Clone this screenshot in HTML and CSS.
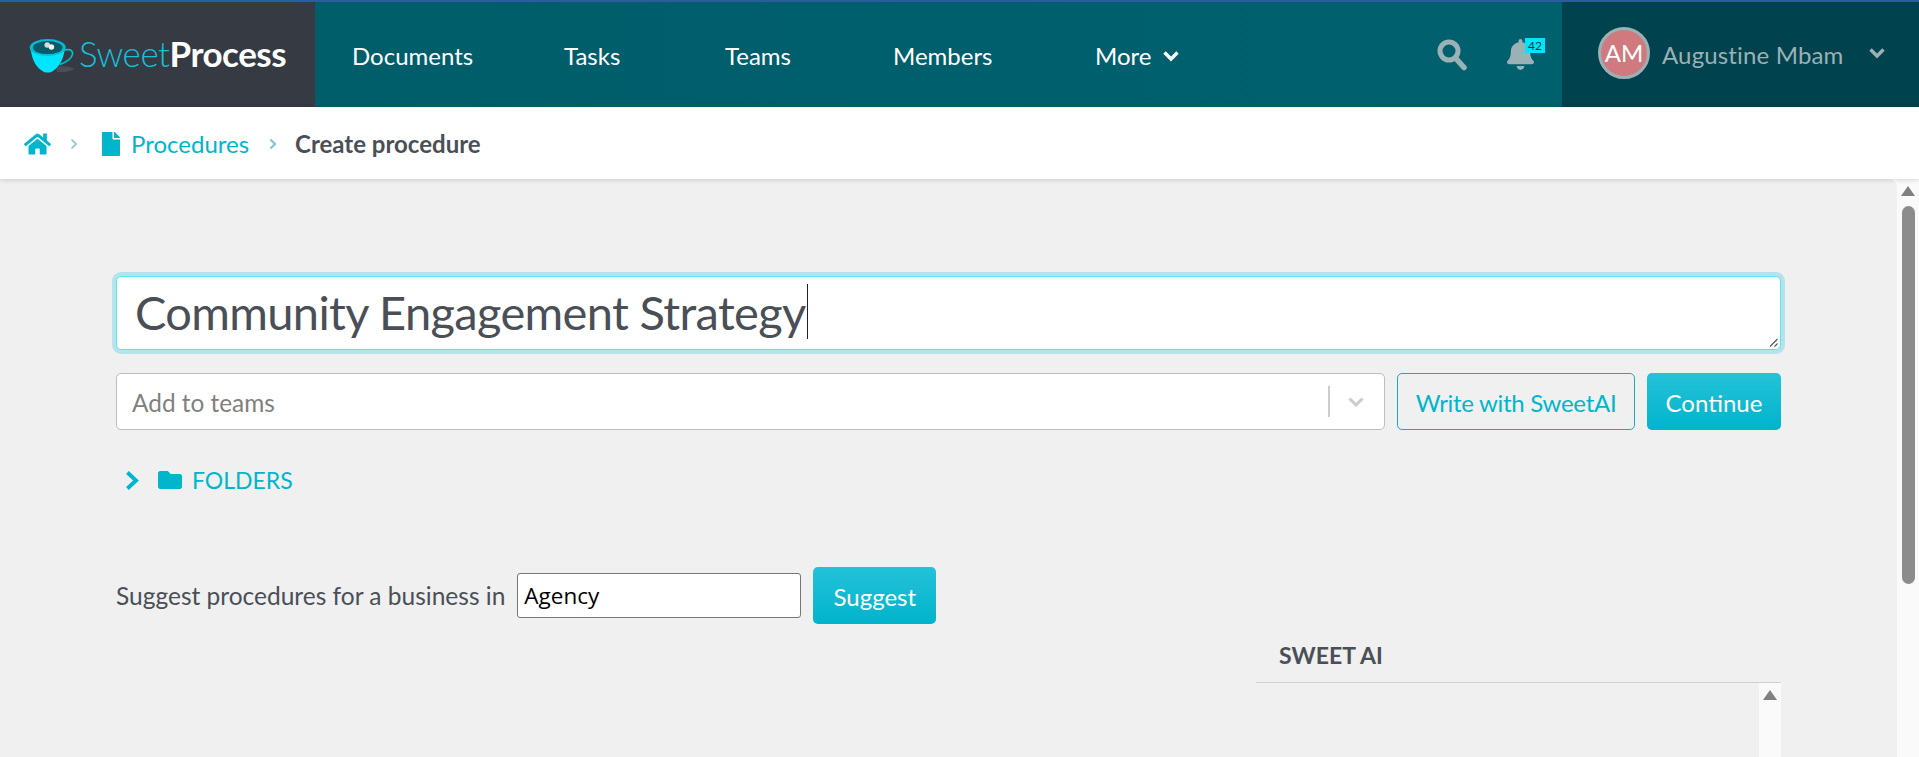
FILE: index.html
```html
<!DOCTYPE html>
<html lang="en">
<head>
<meta charset="utf-8">
<title>Create procedure</title>
<link rel="stylesheet" href="styles.css">
</head>
<body>
<header class="topbar">
  <a class="brand">
    <svg class="cup" viewBox="0 0 44 34">
      <path d="M26 27 q10 -1 17 2 q-6 4 -17 3z" fill="#4b4f55"/>
      <path d="M31 12 q10 -3 10 3 q-1 6 -12 10" fill="none" stroke="#00bcd4" stroke-width="1.6"/>
      <path d="M1 8 Q3 27 14 32 Q17 33 21 32 Q32 26 34 8z" fill="#00e5ff"/>
      <ellipse cx="17.5" cy="9" rx="17" ry="8" fill="#00bcd4"/>
      <ellipse cx="17.5" cy="9" rx="14" ry="6.2" fill="#0a5a68"/>
      <circle cx="17" cy="6.5" r="2.6" fill="#d9d9d9"/>
      <circle cx="21" cy="8.5" r="2.6" fill="#f2f2f2"/>
    </svg>
    <span class="brand-text"><span class="brand-sweet">Sweet</span><span class="brand-process">Process</span></span>
  </a>
  <nav class="mainnav">
    <a class="nav-documents">Documents</a>
    <a class="nav-tasks">Tasks</a>
    <a class="nav-teams">Teams</a>
    <a class="nav-members">Members</a>
    <a class="nav-more">More
      <svg class="chev-more" viewBox="0 0 18 12"><path d="M2.5 2.5 9 9l6.5-6.5" fill="none" stroke="#fff" stroke-width="3.4"/></svg>
    </a>
  </nav>
  <div class="tools">
    <svg class="icon-search" viewBox="0 0 30 32"><circle cx="12" cy="12" r="9" fill="none" stroke="#9ab1b6" stroke-width="5"/><path d="M18.5 19 27 28.5" stroke="#9ab1b6" stroke-width="5.600" stroke-linecap="round"/></svg>
    <span class="bell">
      <svg class="icon-bell" viewBox="0 0 448 512"><path fill="#9ab1b6" d="M224 512c35.32 0 63.97-28.65 63.97-64H160.03c0 35.35 28.65 64 63.97 64zm215.39-149.71c-19.32-20.76-55.47-51.99-55.47-154.29 0-77.7-54.48-139.9-127.94-155.16V32c0-17.67-14.32-32-31.98-32s-31.98 14.33-31.98 32v20.84C118.56 68.1 64.08 130.3 64.08 208c0 102.3-36.15 133.53-55.47 154.29-6 6.45-8.66 14.16-8.61 21.71.11 16.4 12.98 32 32.1 32h383.8c19.12 0 32-15.6 32.1-32 .05-7.55-2.61-15.27-8.61-21.71z"/></svg>
      <span class="badge">42</span>
    </span>
  </div>
  <div class="user">
    <span class="avatar">AM</span>
    <span class="user-name">Augustine Mbam</span>
    <svg class="chev-user" viewBox="0 0 18 12"><path d="M2.5 2.5 9 9l6.5-6.5" fill="none" stroke="#9ab1b6" stroke-width="3.4"/></svg>
  </div>
</header>

<div class="crumbs">
  <svg class="icon-home" viewBox="0 0 576 512"><path fill="#00b5cc" d="M280.37 148.26L96 300.11V464a16 16 0 0 0 16 16l112.06-.29a16 16 0 0 0 15.92-16V368a16 16 0 0 1 16-16h64a16 16 0 0 1 16 16v95.64a16 16 0 0 0 16 16.05L464 480a16 16 0 0 0 16-16V300L295.67 148.26a12.19 12.19 0 0 0-15.3 0zM571.6 251.47L488 182.56V44.05a12 12 0 0 0-12-12h-56a12 12 0 0 0-12 12v72.61L318.47 43a48 48 0 0 0-61 0L4.34 251.47a12 12 0 0 0-1.6 16.9l25.5 31A12 12 0 0 0 45.15 301l235.22-193.74a12.19 12.19 0 0 1 15.3 0L530.9 301a12 12 0 0 0 16.9-1.6l25.5-31a12 12 0 0 0-1.7-16.93z"/></svg>
  <svg class="crumb-sep sep-a" viewBox="0 0 8 12"><path d="M1.5 1.5 6 6l-4.500 4.500" fill="none" stroke="#86c5d0" stroke-width="1.700"/></svg>
  <svg class="icon-file" viewBox="0 0 384 512"><path fill="#00b5cc" d="M224 136V0H24C10.7 0 0 10.7 0 24v464c0 13.3 10.7 24 24 24h336c13.3 0 24-10.7 24-24V160H248c-13.2 0-24-10.8-24-24zm160-14.1v6.1H256V0h6.1c6.400 0 12.500 2.500 17 7l97.900 98c4.500 4.500 7 10.600 7 16.900z"/></svg>
  <a class="crumb-link">Procedures</a>
  <svg class="crumb-sep sep-b" viewBox="0 0 8 12"><path d="M1.5 1.5 6 6l-4.500 4.500" fill="none" stroke="#86c5d0" stroke-width="2.200"/></svg>
  <span class="crumb-current">Create procedure</span>
</div>

<div class="viewport">
  <main class="content">
    <div class="title-box">
      <span class="title-text">Community Engagement Strategy</span><span class="caret"></span>
      <svg class="resize" viewBox="0 0 10 10"><path d="M9.500 2 2 9.500M9.500 6.500 6.500 9.500" stroke="#555" stroke-width="1.100"/></svg>
    </div>
    <div class="action-row">
      <div class="team-select">
        <span class="placeholder">Add to teams</span>
        <span class="select-divider"></span>
        <svg class="chev-select" viewBox="0 0 18 12"><path d="M2.500 2.500 9 9l6.500-6.500" fill="none" stroke="#ccc" stroke-width="3"/></svg>
      </div>
      <button class="btn btn-outline">Write with SweetAI</button>
      <button class="btn btn-solid btn-continue">Continue</button>
    </div>
    <div class="folders">
      <svg class="chev-folder" viewBox="0 0 14 20"><path d="M3 3l7.500 7L3 17" fill="none" stroke="#00b5cc" stroke-width="3.400"/></svg>
      <svg class="icon-folder" viewBox="0 0 512 512"><path fill="#00b5cc" d="M464 128H272l-64-64H48C21.490 64 0 85.490 0 112v288c0 26.510 21.490 48 48 48h416c26.510 0 48-21.490 48-48V176c0-26.510-21.490-48-48-48z"/></svg>
      <span class="folders-label">FOLDERS</span>
    </div>
    <div class="suggest">
      <span class="suggest-label">Suggest procedures for a business in</span>
      <input class="suggest-input" type="text" value="Agency">
      <button class="btn btn-solid btn-suggest">Suggest</button>
    </div>
    <aside class="ai-panel">
      <h2 class="ai-title">SWEET AI</h2>
      <div class="ai-body">
        <div class="ai-scroll"><span class="arrow-up"></span></div>
      </div>
    </aside>
  </main>
  <div class="page-scroll">
    <span class="arrow-up"></span>
    <span class="thumb"></span>
  </div>
</div>
</body>
</html>
```

FILE: styles.css
```css
* { box-sizing: border-box; }
html, body { margin: 0; height: 100%; overflow: hidden; }
body {
  display: flex;
  flex-direction: column;
  background: #fff;
  font-family: Lato, "Noto Sans", sans-serif;
  color: #4a4f57;
}

/* top bar */
.topbar {
  display: flex;
  flex: none;
  height: 107px;
  border-top: 2px solid #2a5c9e;
  background: linear-gradient(90deg, #005d6a, #00616e);
}
.brand {
  display: flex;
  align-items: center;
  flex: none;
  width: 315px;
  padding-left: 29px;
  background: #363a42;
}
.cup { width: 47px; height: 36px; margin-top: 2px; }
.brand-text { margin: 0 0 4px 3px; font-size: 35px; letter-spacing: -0.5px; }
.brand-sweet { color: #14c0da; font-weight: 300; }
.brand-process { color: #fff; font-weight: 700; }

.mainnav {
  display: flex;
  align-items: center;
  flex: none;
  padding: 2px 0 0 37px;
  color: #fff;
  font-size: 24px;
}
.nav-documents { width: 212px; }
.nav-tasks { width: 161px; }
.nav-teams { width: 168px; }
.nav-members { width: 202px; }
.nav-more { display: flex; align-items: center; }
.chev-more { width: 18px; height: 12px; margin-left: 11px; }

.tools {
  display: flex;
  align-items: center;
  flex: none;
  margin-left: auto;
}
.icon-search { width: 30px; height: 32px; }
.bell { position: relative; display: flex; margin: 0 28px 0 40px; }
.icon-bell { width: 27px; height: 31px; }
.badge {
  position: absolute;
  top: -1px;
  right: -11px;
  width: 20px;
  height: 15px;
  background: #00e5ff;
  color: #12323b;
  font-size: 12px;
  line-height: 15px;
  text-align: center;
}

.user {
  display: flex;
  align-items: center;
  flex: none;
  width: 357px;
  padding: 0 0 4px 36px;
  background: #00424d;
  color: #9ab1b6;
}
.avatar {
  display: flex;
  align-items: center;
  justify-content: center;
  width: 52px;
  height: 52px;
  border: 3px solid #9ab1b6;
  border-radius: 50%;
  background: #d07a80;
  color: #fff;
  font-size: 24px;
}
.user-name { margin: 4px 0 0 12px; font-size: 24px; letter-spacing: 0.15px; width: 206px; }
.chev-user { width: 18px; height: 12px; }

/* breadcrumbs */
.crumbs {
  position: relative;
  z-index: 1;
  display: flex;
  align-items: center;
  flex: none;
  height: 72px;
  padding: 1px 0 0 24px;
  background: #fff;
  box-shadow: 0 1px 5px rgba(0, 0, 0, 0.16);
  font-size: 24px;
}
.icon-home { width: 27px; height: 24px; }
.crumb-sep { width: 8px; height: 12px; }
.sep-a { margin-left: 19px; }
.icon-file { width: 18px; height: 24px; margin-left: 24px; }
.crumb-link { margin-left: 11px; color: #00b5cc; }
.sep-b { margin-left: 20px; }
.crumb-current { margin-left: 18px; font-weight: 700; color: #4a4f57; }

/* body */
.viewport { display: flex; flex: 1; min-height: 0; }
.content {
  flex: 1;
  min-width: 0;
  padding: 97px 116px 0;
  background: #f0f0f0;
  border-top-right-radius: 8px;
}
.title-box {
  position: relative;
  display: flex;
  align-items: center;
  height: 74px;
  padding: 0 0 3px 18px;
  border: 1px solid #5ce6f5;
  border-radius: 5px;
  background: #fff;
  box-shadow: 0 0 0 4px #b5e3ea;
  font-size: 47px;
}
.title-text { color: #4a4f57; letter-spacing: -0.65px; }
.caret { width: 1px; height: 55px; margin-left: 1px; background: #222; }
.resize { position: absolute; right: 2px; bottom: 2px; width: 10px; height: 10px; }

.action-row { display: flex; gap: 12px; margin-top: 23px; }
.team-select {
  display: flex;
  align-items: center;
  flex: 1;
  height: 57px;
  padding: 0 19px 0 15px;
  border: 1px solid #bdbdbd;
  border-radius: 5px;
  background: #fff;
}
.placeholder { flex: 1; padding-top: 1px; color: #808080; font-size: 24.4px; }
.select-divider { width: 2px; height: 31px; margin-right: 17px; background: #ccc; }
.chev-select { width: 18px; height: 12px; }
.btn {
  height: 57px;
  padding: 2px 0 0;
  border-radius: 5px;
  font-family: Lato, sans-serif;
  font-size: 24px;
}
.btn-outline {
  width: 238px;
  border: 1px solid #1aa9bd;
  background: transparent;
  color: #00b5cc;
  letter-spacing: -0.3px;
}
.btn-solid {
  border: 0;
  background: linear-gradient(180deg, #24c2d8, #00b4cc);
  color: #fff;
}
.btn-continue { width: 134px; }

.folders {
  display: flex;
  align-items: center;
  margin-top: 36px;
  padding-left: 8px;
  color: #00b5cc;
  font-size: 23px;
}
.chev-folder { width: 16px; height: 23px; }
.icon-folder { width: 24px; height: 24px; margin-left: 18px; }
.folders-label { margin-left: 10px; }

.suggest { display: flex; align-items: center; gap: 12px; margin-top: 73px; }
.suggest-label { font-size: 24.5px; }
.suggest-input {
  width: 284px;
  height: 45px;
  padding: 0 5px 0 6px;
  border: 1px solid #767676;
  border-radius: 3px;
  background: #fff;
  color: #000;
  font-family: "Open Sans", sans-serif;
  font-size: 22.5px;
}
.btn-suggest { width: 123px; }

.ai-panel { width: 525px; margin: 12px 0 0 auto; }
.ai-title {
  margin: 0;
  height: 47px;
  padding: 4px 0 0 23px;
  border-bottom: 1px solid #d0d0d0;
  font-size: 23px;
  font-weight: 700;
  line-height: 30px;
}
.ai-body { display: flex; justify-content: flex-end; height: 80px; }
.ai-scroll { display: flex; justify-content: center; width: 22px; padding-top: 7px; background: #fafafa; }

.page-scroll {
  position: relative;
  display: flex;
  flex-direction: column;
  align-items: center;
  flex: none;
  width: 22px;
  padding-top: 7px;
  background: #fafafa;
}
.arrow-up {
  width: 0;
  height: 0;
  border-left: 7px solid transparent;
  border-right: 7px solid transparent;
  border-bottom: 10px solid #808080;
}
.thumb { width: 13px; height: 378px; margin-top: 10px; border-radius: 7px; background: #8c8c8c; }
```
